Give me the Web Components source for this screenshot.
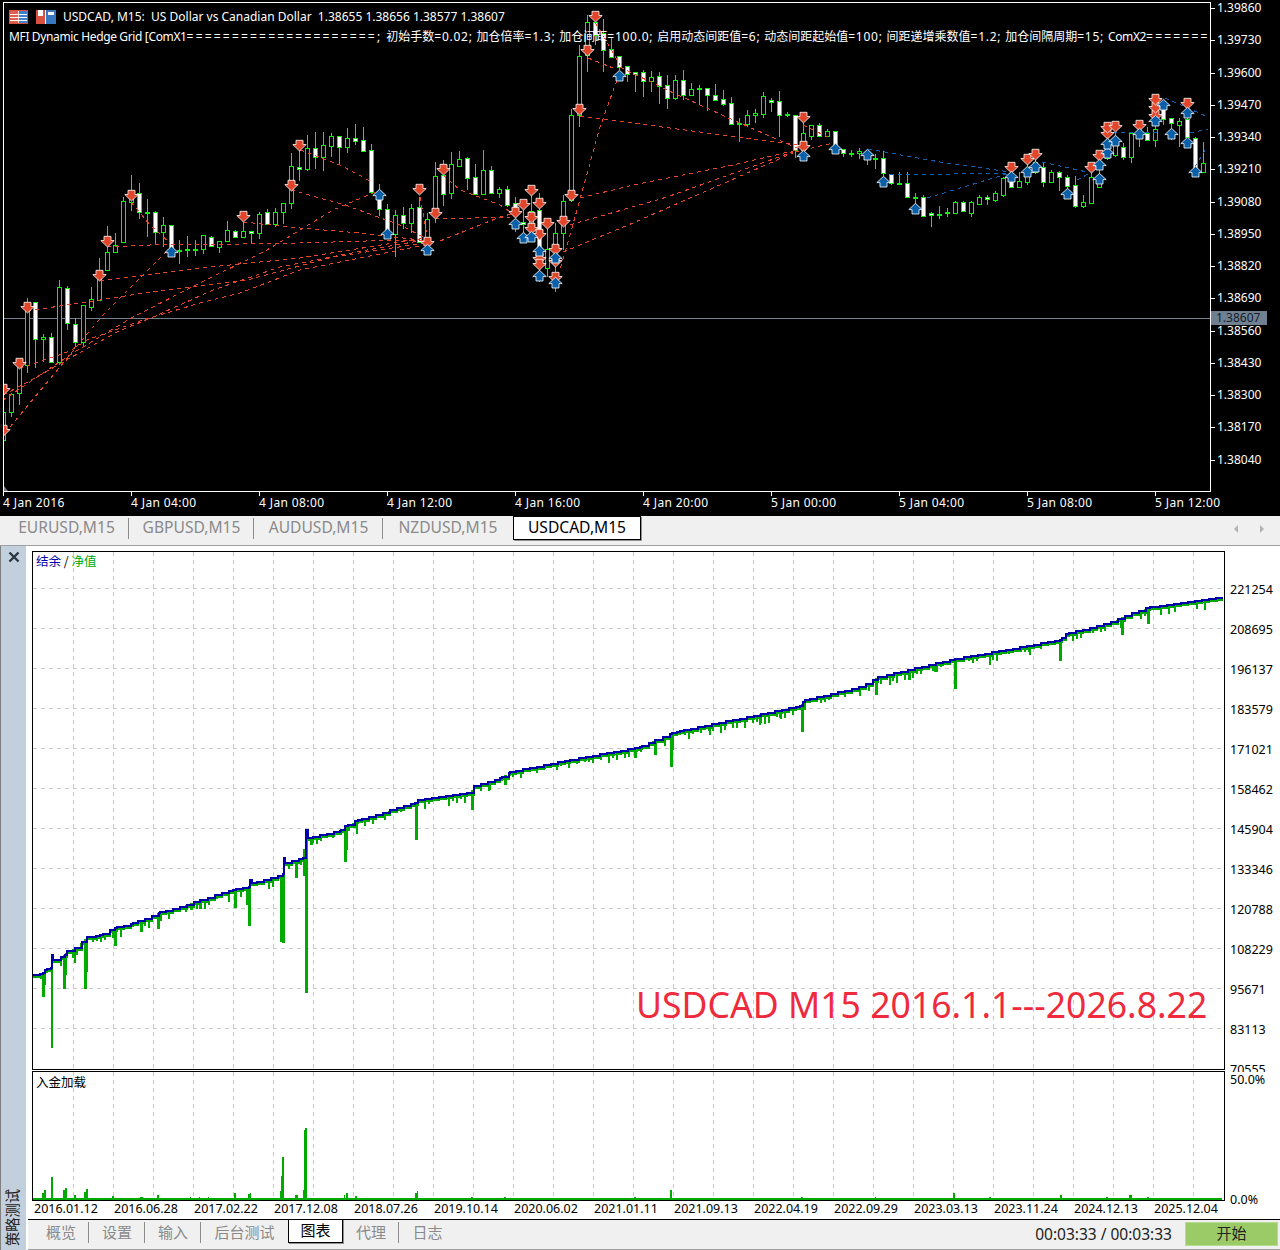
<!DOCTYPE html>
<html>
<head>
<meta charset="utf-8">
<style>
  html, body { margin: 0; padding: 0; background: #000; }
  body { width: 1280px; height: 1250px; overflow: hidden; font-family: "Noto Sans", "Noto Sans CJK SC", sans-serif; }
</style>
</head>
<body>
<mt-app>
  <price-chart></price-chart>
  <tab-strip kind="symbols">
    <tab-item style="width:125px">EURUSD,M15</tab-item>
    <tab-item style="width:125px">GBPUSD,M15</tab-item>
    <tab-item style="width:129px">AUDUSD,M15</tab-item>
    <tab-item style="width:130px" nosep>NZDUSD,M15</tab-item>
    <tab-item style="width:128px" active nosep>USDCAD,M15</tab-item>
  </tab-strip>
  <tester-panel>
    <equity-chart></equity-chart>
    <load-chart></load-chart>
    <date-axis></date-axis>
    <tester-bar>
      <tab-strip kind="tester">
        <tab-item style="width:56px">概览</tab-item>
        <tab-item style="width:56px">设置</tab-item>
        <tab-item style="width:56px">输入</tab-item>
        <tab-item style="width:87px" nosep>后台测试</tab-item>
        <tab-item style="width:55px" active nosep>图表</tab-item>
        <tab-item style="width:56px">代理</tab-item>
        <tab-item style="width:57px" nosep>日志</tab-item>
      </tab-strip>
    </tester-bar>
  </tester-panel>
</mt-app>

<script>
const UI_FONT = '"Noto Sans", "Noto Sans CJK SC", sans-serif';

// [kind, top, bottom, high, low]  kind 0 hollow, 1 white, 2 dash. one per bar, 8px apart from x=3
const CANDLES = [
  [0,412,440,412,445],[0,394,412,393,417],[0,367,393,363,405],[0,310,365,298,373],[1,302,339,302,368],[0,337,339,334,362],
  [1,337,362,333,363],[0,287,362,280,363],[1,288,323,286,330],[1,324,342,318,347],[0,305,342,305,347],[0,299,307,287,311],
  [0,278,300,258,300],[0,252,270,226,270],[0,245,252,233,252],[0,201,242,197,242],[0,193,202,175,211],[1,193,212,183,219],
  [2,212,212,199,237],[1,212,232,211,245],[0,225,232,217,247],[1,225,247,225,250],[2,250,250,240,264],[2,249,249,236,257],
  [2,249,249,240,256],[0,235,249,235,254],[1,237,246,236,247],[0,241,247,241,253],[0,230,241,221,241],[1,231,237,230,237],
  [0,231,237,222,237],[1,231,233,231,243],[0,214,233,212,239],[1,212,224,209,225],[0,212,224,208,227],[0,203,212,203,224],
  [0,166,203,153,209],[1,167,169,145,181],[0,148,169,135,171],[1,148,157,132,169],[0,145,157,132,171],[0,136,146,133,157],
  [1,136,147,136,165],[0,138,147,128,153],[1,138,141,124,145],[1,140,151,127,151],[1,150,192,144,192],[1,198,209,184,216],
  [1,209,232,204,233],[0,215,234,210,257],[1,215,223,207,229],[0,208,223,204,233],[1,207,242,197,243],[0,219,240,213,250],
  [0,176,213,162,223],[1,175,194,160,206],[0,164,193,152,199],[0,159,166,151,166],[1,158,178,157,190],[1,177,194,164,194],
  [0,170,194,150,194],[1,170,193,166,193],[0,189,193,187,198],[1,189,205,186,207],[1,203,210,197,232],[1,222,224,200,242],
  [0,211,223,190,237],[1,210,247,193,282],[0,249,268,219,277],[0,233,250,223,292],[0,201,233,195,250],[0,115,200,109,202],
  [0,56,115,45,127],[0,22,55,15,72],[1,22,35,12,45],[1,33,50,19,72],[1,49,57,38,57],[1,56,67,56,70],
  [1,66,74,66,82],[1,72,74,72,92],[1,72,81,70,97],[0,77,81,71,92],[1,76,86,72,104],[1,85,98,75,109],
  [0,80,98,75,100],[1,80,95,70,100],[0,89,95,83,95],[2,88,88,85,105],[1,88,95,88,111],[1,95,100,84,100],
  [1,99,104,90,106],[1,103,124,97,125],[2,123,123,118,142],[0,115,124,110,127],[0,113,115,109,123],[0,96,114,92,118],
  [1,100,102,98,112],[1,101,115,91,137],[2,114,114,112,117],[1,115,150,115,158],[0,133,150,123,158],[0,125,136,125,140],
  [1,125,136,123,137],[0,131,136,129,136],[1,131,147,131,153],[1,149,153,149,157],[2,153,153,150,157],[0,151,153,148,159],
  [0,155,158,150,165],[2,158,158,154,169],[1,158,173,151,177],[1,174,183,174,185],[2,183,183,172,184],[1,183,197,172,198],
  [2,197,197,193,205],[1,197,216,195,217],[1,213,215,212,227],[2,214,214,206,219],[2,212,212,208,217],[0,202,213,201,214],
  [1,202,211,201,212],[0,202,213,201,217],[0,197,204,195,205],[1,197,199,195,205],[0,193,200,191,202],[0,178,195,177,197],
  [1,178,187,170,187],[0,181,187,172,187],[0,173,182,162,185],[0,162,172,158,174],[1,167,182,162,187],[0,172,182,170,183],
  [1,172,177,171,191],[1,177,186,175,197],[1,185,206,176,208],[0,202,206,195,208],[0,177,203,165,204],[0,175,187,158,187],
  [0,153,158,130,160],[0,140,155,133,157],[1,147,157,143,160],[0,133,157,132,163],[0,132,135,130,147],[1,133,140,127,140],
  [0,129,140,107,147],[1,108,119,100,125],[1,118,123,118,140],[0,121,125,118,147],[1,119,137,110,143],[1,138,168,137,175],
  [0,163,172,142,173]
];

// sell arrows [centre x, top y]
const SELLS = [[3,384],[3,425],[19,358],[27,302],[99,270],[107,236],[131,190],[243,211],[291,180],[299,140],
  [419,184],[427,237],[435,208],[443,164],[515,207],[523,199],[531,185],[531,212],[531,223],[539,198],[539,229],
  [539,253],[539,259],[547,218],[555,244],[555,256],[555,272],[563,216],[571,190],[579,104],[587,45],[595,11],
  [803,112],[803,141],[1011,162],[1027,154],[1035,149],[1091,162],[1099,150],[1107,128],[1107,122],[1115,121],
  [1139,120],[1155,110],[1155,102],[1155,94],[1187,98]];
const BUYS = [[171,246],[379,189],[387,228],[427,244],[515,218],[523,232],[531,231],[539,245],[539,270],[555,252],
  [555,277],[619,70],[803,150],[835,143],[867,149],[883,176],[915,203],[1011,171],[1027,166],[1035,161],[1067,188],
  [1099,173],[1099,159],[1107,147],[1107,138],[1115,135],[1139,128],[1155,115],[1163,99],[1171,128],[1187,137],
  [1187,107],[1195,166]];

const RED_LINES = [
  '3,395 28,382 70,358 117,332 153,317 213,290 280,267 367,250 425,240',
  '27,311 80,303 100,300 150,292 247,280 333,257 425,243',
  '100,281 200,268 300,258 425,238',
  '19,368 33,364 70,351 87,340 143,320 200,303 240,293 300,270 425,245',
  '107,247 150,245 240,244 300,243 400,240 425,240',
  '243,222 300,228 360,233 420,240',
  '291,190 345,205 400,225 425,238',
  '131,202 150,225 170,243',
  '300,150 340,165 372,182',
  '375,192 333,210 267,250 200,283 133,317 73,353 3,400',
  '10,427 103,315 168,250',
  '420,197 427,235',
  '440,241 500,217 515,213',
  '435,219 510,217',
  '443,175 460,190 500,205 515,215',
  '588,58 613,68',
  '595,22 620,65',
  '580,116 797,145',
  '617,80 600,127 577,210 560,270',
  '580,198 633,185 733,165 797,150',
  '570,225 667,197 793,152',
  '563,252 633,223 793,153',
  '620,67 667,90 733,120 797,148',
  '803,125 830,138',
  '795,152 833,143'
];
const BLUE_LINES = [
  '868,149 940,162 1010,172',
  '1042,162 1087,172',
  '890,175 1010,173',
  '927,198 957,189 1010,173',
  '1077,180 1090,173',
  '1165,98 1208,117',
  '1113,133 1157,132',
  '1190,133 1208,129',
  '1195,167 1207,147'
];

function arrowSvg(cx, top, fill, up) {
  const pts = up ? '6.5,0.3 13.2,6.6 10,6.6 10,11 3,11 3,6.6 -0.2,6.6' : '3,0.3 10,0.3 10,4.5 13.2,4.5 6.5,11 -0.2,4.5 3,4.5';
  return `<polygon transform="translate(${cx - 6} ${top})" points="${pts}" fill="${fill}" stroke="#fff" stroke-width="0.8"/>`;
}

class PriceChart extends HTMLElement {
  constructor() {
    super();
    this.attachShadow({ mode: "open" });
  }

  connectedCallback() {
    const prices = ["1.39860","1.39730","1.39600","1.39470","1.39340","1.39210","1.39080","1.38950","1.38820","1.38690","1.38560","1.38430","1.38300","1.38170","1.38040"];
    const times = ["4 Jan 2016","4 Jan 04:00","4 Jan 08:00","4 Jan 12:00","4 Jan 16:00","4 Jan 20:00","5 Jan 00:00","5 Jan 04:00","5 Jan 08:00","5 Jan 12:00"];
    let bars = "";
    CANDLES.forEach((c, i) => {
      const x = 3 + i * 8;
      const [kind, top, bot, hi, lo] = c;
      bars += `<rect x="${x}" y="${hi}" width="1" height="${lo - hi}" fill="#12ee12"/>`;
      if (kind === 2) {
        bars += `<rect x="${x - 2}" y="${top}" width="5" height="2" fill="#12ee12"/>`;
      } else {
        bars += `<rect x="${x - 2}" y="${top}" width="5" height="${bot - top + 1}" fill="#12ee12"/>`;
        bars += `<rect x="${x - 1}" y="${top + 1}" width="3" height="${Math.max(bot - top - 1, 1)}" fill="${kind ? "#fff" : "#000"}"/>`;
      }
    });
    const dash = (list, color) => list.map(p => `<polyline points="${p}" fill="none" stroke="${color}" stroke-width="1" stroke-dasharray="4 4"/>`).join("");
    const arrows = SELLS.map(a => arrowSvg(a[0], a[1], "#e2462a", false)).join("") + BUYS.map(a => arrowSvg(a[0], a[1], "#0a60a8", true)).join("");

    this.shadowRoot.innerHTML = `
      <style>
        :host { display: grid; grid-template-columns: 1211px 1fr; grid-template-rows: 492px 1fr; height: 516px; background: #000; color: #fff; font: 12px ${UI_FONT}; box-sizing: border-box; padding: 2px 0 0 3px; width: 1280px; }
        .plot { position: relative; border: 1px solid #fff; box-sizing: border-box; width: 1208px; height: 490px; overflow: hidden; }
        svg.bars { display: block; width: 1206px; height: 488px; }
        .legend { position: absolute; left: 5px; white-space: pre; }
        .l1 { top: 5px; display: flex; align-items: center; gap: 8px; }
        .l2 { top: 24px; right: 0; overflow: hidden; }
        .l2 .tight { letter-spacing: -0.36px; }
        .l2 .eq { letter-spacing: 2.2px; }
        .l2 .lat { letter-spacing: 0.75px; }
        .l2 .first { letter-spacing: 1.5px; }
        .prices { display: flex; flex-direction: column; margin-left: -3px; position: relative; margin-top: -10px; }
        .prices div { height: 32.27px; line-height: 32.27px; padding-left: 6px; position: relative; flex: none; }
        .prices div::before { content: ""; position: absolute; left: 0; top: 16px; width: 4px; height: 1px; background: #fff; }
        .prices .now { position: absolute; left: 0; top: 319px; width: 56px; height: 14px; line-height: 14px; background: #708090; color: #14202c; padding-left: 5px; box-sizing: border-box; }
        .prices .now::before { display: none; }
        .times { grid-column: 1 / 3; display: flex; margin-top: -2px; letter-spacing: 0.38px; }
        .times div { flex: 0 0 128px; padding-top: 2px; position: relative; line-height: 18px; }
        .times div::before { content: ""; position: absolute; left: 0; top: 0; width: 1px; height: 4px; background: #fff; }
        .corner { position: absolute; left: 0; bottom: 0; width: 0; height: 0; border-left: 4px solid #778; border-top: 5px solid transparent; }
      </style>
      <div class="plot">
        <svg class="bars" viewBox="4 3 1206 488" shape-rendering="crispEdges">
          <rect x="4" y="318" width="1206" height="1" fill="#708090"/>
          ${bars}
          ${dash(RED_LINES, "#e8442a")}
          ${dash(BLUE_LINES, "#1060b0")}
          <g shape-rendering="auto">${arrows}</g>
        </svg>
        <div class="corner"></div>
        <div class="legend l1">
          <svg width="19" height="14" viewBox="0 0 19 14" shape-rendering="crispEdges">
            <rect width="19" height="14" fill="#d85040"/><rect x="1" y="1" width="17" height="12" fill="#f4d4cc"/>
            <rect x="1" y="1" width="8" height="12" fill="#e06050"/><rect x="10" y="1" width="8" height="12" fill="#4080c8"/>
            <rect x="1" y="4" width="17" height="1" fill="#fff"/><rect x="1" y="7" width="17" height="1" fill="#fff"/><rect x="1" y="10" width="17" height="1" fill="#fff"/>
          </svg>
          <svg width="20" height="14" viewBox="0 0 20 14" shape-rendering="crispEdges">
            <rect width="9" height="14" fill="#d85040"/><rect x="2" y="0" width="5" height="6" fill="#fff"/>
            <rect x="10" y="0" width="10" height="14" fill="#3878c0"/><rect x="12" y="2" width="6" height="3" fill="#fff"/>
            <rect x="9" y="0" width="1" height="14" fill="#fff"/>
          </svg>
          <span style="margin-left:-1px">USDCAD, M15:  US Dollar vs Canadian Dollar  1.38655 1.38656 1.38577 1.38607</span>
        </div>
        <div class="legend l2"><span class="tight">MFI Dynamic Hedge Grid [ComX1</span><span class="eq">=====================</span><span class="first">; </span>初始手数<span class="lat">=0.02; </span>加仓倍率<span class="lat">=1.3; </span>加仓间距<span class="lat">=100.0; </span>启用动态间距值<span class="lat">=6; </span>动态间距起始值<span class="lat">=100; </span>间距递增乘数值<span class="lat">=1.2; </span>加仓间隔周期<span class="lat">=15; </span><span class="tight">ComX2</span><span class="eq">=========</span></div>
      </div>
      <div class="prices">
        ${prices.map(p => `<div>${p}</div>`).join("")}
        <div class="now">1.38607</div>
      </div>
      <div class="times">${times.map(t => `<div>${t}</div>`).join("")}</div>
    `;
  }
}

class TabStrip extends HTMLElement {
  constructor() {
    super();
    this.attachShadow({ mode: "open" });
  }

  connectedCallback() {
    const symbols = this.getAttribute("kind") === "symbols";
    this.shadowRoot.innerHTML = `
      <style>
        :host { display: flex; background: #f0f0f0; box-sizing: border-box; }
        :host([kind="symbols"]) { height: 30px; padding-left: 4px; border-bottom: 1px solid #a0a0a0; font-size: 15.6px; position: relative; width: 1280px; --tab-line: 21px; --active-top: 0; }
        :host([kind="tester"]) { flex: 1; height: 30px; padding-left: 5px; border-top: 1px solid #000; font-size: 15px; --tab-line: 22px; --active-top: -1px; }
        .arrows { margin-left: auto; display: flex; gap: 18px; padding: 9px 14px 0 0; }
      </style>
      <slot></slot>
      ${symbols ? `<div class="arrows">
        <svg width="8" height="8"><polygon points="6,0 6,8 2,4" fill="#b4b4b4"/></svg>
        <svg width="8" height="8"><polygon points="2,0 2,8 6,4" fill="#b4b4b4"/></svg>
      </div>` : ""}
    `;
  }
}

class TabItem extends HTMLElement {
  constructor() {
    super();
    this.attachShadow({ mode: "open" });
  }

  connectedCallback() {
    this.shadowRoot.innerHTML = `
      <style>
        :host { display: block; position: relative; box-sizing: border-box; height: 23px; line-height: var(--tab-line); text-align: center; color: #8a8a8a; white-space: nowrap; flex: none; margin-top: 1px; }
        :host([active]) { background: #fff; color: #000; border: 1px solid #000; box-shadow: 1px 1px 0 #909090; margin-top: var(--active-top); height: 24px; line-height: 21px; }
        :host(:not([nosep]))::after { content: ""; position: absolute; right: 0; top: 1px; height: 21px; width: 1px; background: #8c8c8c; }
      </style>
      <slot></slot>
    `;
  }
}

class TesterPanel extends HTMLElement {
  constructor() {
    super();
    this.attachShadow({ mode: "open" });
  }

  connectedCallback() {
    this.shadowRoot.innerHTML = `
      <style>
        :host { display: flex; height: 704px; background: #fff; width: 1280px; font: 12.5px ${UI_FONT}; color: #000; }
        .strip { flex: 0 0 26px; box-sizing: border-box; background: #c2cfdd; border-left: 1px solid #808080; display: flex; flex-direction: column; justify-content: space-between; align-items: center; padding: 5px 0 4px; }
        .name { writing-mode: vertical-rl; text-orientation: sideways; transform: rotate(180deg); font: 14.25px "Noto Sans CJK SC", sans-serif; color: #222; line-height: 20px; margin-left: -3px; }
        .main { flex: 1; display: flex; flex-direction: column; min-width: 0; padding-top: 5px; }
      </style>
      <div class="strip">
        <svg width="12" height="12" viewBox="0 0 12 12"><path d="M1.5 1.5 L10.5 10.5 M10.5 1.5 L1.5 10.5" stroke="#2b3640" stroke-width="2.4"/></svg>
        <div class="name">策略测试</div>
      </div>
      <div class="main"><slot></slot></div>
    `;
  }
}

function gridLines(x0, x1, y0, y1, hs) {
  let s = "";
  for (let x = 73; x < x1; x += 40) s += `<line x1="${x}.5" x2="${x}.5" y1="${y0}" y2="${y1}"/>`;
  hs.forEach(y => { s += `<line x1="${x0}" x2="${x1}" y1="${y}.5" y2="${y}.5"/>`; });
  return `<g stroke="#c8c8c8" stroke-width="1" stroke-dasharray="4 4" shape-rendering="crispEdges">${s}</g>`;
}

const BALANCE = [[33,975],[43,973],[45,970],[51,968],[52,955],[53,960],[65,955],[67,951],[75,948],[87,937],[100,935],[115,928],[133,923],[153,916],[160,912],[180,907],[200,900],[233,890],[249,887],[250,880],[252,883],[273,878],[283,874],[284,858],[285,863],[303,858],[306,830],[308,838],[320,835],[340,831],[345,826],[358,820],[415,803],[418,800],[470,793],[474,786],[500,778],[510,772],[570,760],[640,747],[655,740],[672,733],[680,731],[800,706],[805,700],[860,687],[878,677],[955,659],[1060,640],[1066,634],[1105,624],[1125,616],[1150,607],[1222,597]];
// drawdown spikes [x, lowest y, width]
const DIPS = [[43,997,3],[45,985,2],[52,1048,2],[64,989,3],[66,975,2],[75,963,2],[73,958,2],[85,989,3],[87,972,2],[115,946,3],[113,938,2],[141,932,3],[158,929,3],[186,912,2],[191,910,3],[200,909,3],[209,905,2],[235,908,3],[249,926,3],[247,905,2],[281,942,2],[283,943,3],[296,878,3],[304,876,3],[306,993,3],[311,845,3],[345,862,3],[347,850,2],[357,834,2],[416,840,3],[472,810,3],[490,790,2],[505,785,3],[635,758,3],[655,755,3],[671,767,3],[673,750,2],[710,735,2],[760,725,2],[780,718,2],[802,732,3],[860,696,2],[876,695,3],[890,685,2],[910,680,2],[935,672,2],[955,689,3],[990,665,2],[1030,655,2],[1060,661,3],[1090,632,2],[1122,635,3],[1148,624,3],[1175,612,2]];

function balanceAt(x) {
  for (let i = 1; i < BALANCE.length; i++) {
    if (x <= BALANCE[i][0]) {
      const [ax, ay] = BALANCE[i - 1], [bx, by] = BALANCE[i];
      return ay + (by - ay) * (x - ax) / (bx - ax || 1);
    }
  }
  return BALANCE[BALANCE.length - 1][1];
}

// the balance only moves in steps, never on a slope
function stepped(offset) {
  const xs = new Set(BALANCE.map(p => p[0]));
  for (let x = 33; x < 1222; x += 7) xs.add(x);
  const sorted = [...xs].sort((a, b) => a - b);
  let d = `M33 ${975 + offset}`;
  sorted.forEach(x => {
    d += ` H${x} V${Math.round(balanceAt(x)) + offset}`;
  });
  return d;
}

class EquityChart extends HTMLElement {
  constructor() {
    super();
    this.attachShadow({ mode: "open" });
  }

  connectedCallback() {
    const vals = ["221254","208695","196137","183579","171021","158462","145904","133346","120788","108229","95671","83113","70555"];
    const hs = vals.slice(0, 12).map((v, i) => 588 + i * 40);
    let dips = "";
    DIPS.forEach(d => { dips += `<rect x="${d[0] - 1}" y="${Math.round(balanceAt(d[0]))}" width="${d[2]}" height="${d[1] - Math.round(balanceAt(d[0]))}"/>`; });
    // the little dips between the big ones
    let seed = 7;
    for (let x = 36; x < 1220; x += 4) {
      seed = (seed * 137 + 41) % 251;
      if (seed % 2 === 0) dips += `<rect x="${x}" y="${Math.round(balanceAt(x))}" width="2" height="${4 + seed % 7}"/>`;
    }
    this.shadowRoot.innerHTML = `
      <style>
        :host { display: flex; height: 519px; flex: none; margin-left: 6px; }
        .plot { position: relative; width: 1193px; height: 519px; box-sizing: border-box; border: 1px solid #000; flex: none; }
        svg { display: block; width: 1191px; height: 517px; }
        .name { position: absolute; left: 3px; top: 0; font: 12.5px "Noto Sans CJK SC", sans-serif; line-height: 18px; }
        .watermark { position: absolute; left: 603px; top: 429px; font: 35.6px "Noto Sans", sans-serif; color: #ee2a3c; white-space: nowrap; line-height: 46px; }
        .axis { flex: 1; align-self: flex-start; height: 521px; box-sizing: border-box; overflow: hidden; padding: 30px 0 0 5px; }
        .axis div { height: 40px; line-height: 18px; }
      </style>
      <div class="plot">
        <svg viewBox="33 552 1191 517" shape-rendering="crispEdges">
          ${gridLines(33, 1224, 552, 1069, hs)}
          <g fill="#00aa00">${dips}</g>
          <path d="${stepped(2)}" fill="none" stroke="#00aa00" stroke-width="2"/>
          <path d="${stepped(0)}" fill="none" stroke="#0000aa" stroke-width="2"/>
        </svg>
        <div class="name"><span style="color:#0000aa">结余</span> / <span style="color:#00aa00">净值</span></div>
        <div class="watermark">USDCAD M15 2016.1.1---2026.8.22</div>
      </div>
      <div class="axis">${vals.map(v => `<div>${v}</div>`).join("")}</div>
    `;
  }
}

class LoadChart extends HTMLElement {
  constructor() {
    super();
    this.attachShadow({ mode: "open" });
  }

  connectedCallback() {
    const bars = [[43,1193,2],[45,1190,2],[52,1177,2],[64,1190,2],[66,1188,2],[75,1195,2],[85,1192,2],[87,1189,2],[113,1196,2],[141,1197,3],[158,1195,2],[191,1197,1],[200,1197,1],[209,1197,1],[235,1193,2],[249,1194,2],[251,1193,1],[281,1191,1],[282,1176,1],[283,1157,2],[296,1195,3],[304,1190,1],[305,1130,1],[306,1128,2],[345,1195,1],[347,1193,2],[356,1196,2],[416,1193,2],[418,1191,1],[472,1197,2],[505,1197,2],[635,1197,2],[671,1190,2],[802,1197,2],[876,1197,1],[954,1193,2],[990,1197,2],[1061,1195,2],[1107,1197,2],[1130,1195,3],[1148,1197,2]];
    const rects = bars.map(b => `<rect x="${b[0] - 1}" y="${b[1]}" width="${b[2]}" height="${1199 - b[1]}"/>`).join("");
    this.shadowRoot.innerHTML = `
      <style>
        :host { display: flex; height: 130px; flex: none; margin: 1px 0 0 6px; position: relative; }
        .plot { position: relative; width: 1193px; height: 130px; box-sizing: border-box; border: 1px solid #000; flex: none; }
        svg { display: block; width: 1191px; height: 128px; }
        .name { position: absolute; left: 3px; top: 1px; font: 12.5px "Noto Sans CJK SC", sans-serif; line-height: 18px; }
        .axis { flex: 1; display: flex; flex-direction: column; justify-content: space-between; padding: 0 0 0 5px; line-height: 18px; margin-bottom: -8px; }
      </style>
      <div class="plot">
        <svg viewBox="33 1072 1191 128" shape-rendering="crispEdges">
          ${gridLines(33, 1224, 1072, 1199, [])}
          <g fill="#00aa00">${rects}</g>
          <rect x="33" y="1198" width="1189" height="2" fill="#00aa00"/>
        </svg>
        <div class="name">入金加载</div>
      </div>
      <div class="axis"><div>50.0%</div><div>0.0%</div></div>
    `;
  }
}

class DateAxis extends HTMLElement {
  constructor() {
    super();
    this.attachShadow({ mode: "open" });
  }

  connectedCallback() {
    const dates = ["2016.01.12","2016.06.28","2017.02.22","2017.12.08","2018.07.26","2019.10.14","2020.06.02","2021.01.11","2021.09.13","2022.04.19","2022.09.29","2023.03.13","2023.11.24","2024.12.13","2025.12.04"];
    this.shadowRoot.innerHTML = `
      <style>
        :host { display: flex; flex: none; height: 18px; padding-left: 8px; line-height: 15px; }
        div { flex: 0 0 80px; }
      </style>
      ${dates.map(d => `<div>${d}</div>`).join("")}
    `;
  }
}

class TesterBar extends HTMLElement {
  constructor() {
    super();
    this.attachShadow({ mode: "open" });
  }

  connectedCallback() {
    this.shadowRoot.innerHTML = `
      <style>
        :host { display: flex; flex: 1; height: 31px; background: #f0f0f0; border-bottom: 1px solid #a0a0a0; box-sizing: border-box; position: relative; font: 15px ${UI_FONT}; margin-left: 2px; }
        .end { position: absolute; right: 0; top: 0; height: 30px; display: flex; align-items: center; }
        .clock { margin-right: 13px; font-size: 15.5px; color: #222; }
        .go { width: 93px; height: 24px; margin: 0 2px 0 0; box-sizing: border-box; background: #9bcb66; border: 1px solid #b6dc90; text-align: center; line-height: 21px; color: #222; }
      </style>
      <slot></slot>
      <div class="end">
        <div class="clock">00:03:33 / 00:03:33</div>
        <div class="go">开始</div>
      </div>
    `;
  }
}

class MtApp extends HTMLElement {
  constructor() {
    super();
    this.attachShadow({ mode: "open" });
  }

  connectedCallback() {
    this.shadowRoot.innerHTML = `
      <style>
        :host { display: flex; flex-direction: column; width: 1280px; height: 1250px; font-family: ${UI_FONT}; }
      </style>
      <slot></slot>
    `;
  }
}

customElements.define("price-chart", PriceChart);
customElements.define("tab-strip", TabStrip);
customElements.define("tab-item", TabItem);
customElements.define("tester-panel", TesterPanel);
customElements.define("equity-chart", EquityChart);
customElements.define("load-chart", LoadChart);
customElements.define("date-axis", DateAxis);
customElements.define("tester-bar", TesterBar);
customElements.define("mt-app", MtApp);
</script>
</body>
</html>
